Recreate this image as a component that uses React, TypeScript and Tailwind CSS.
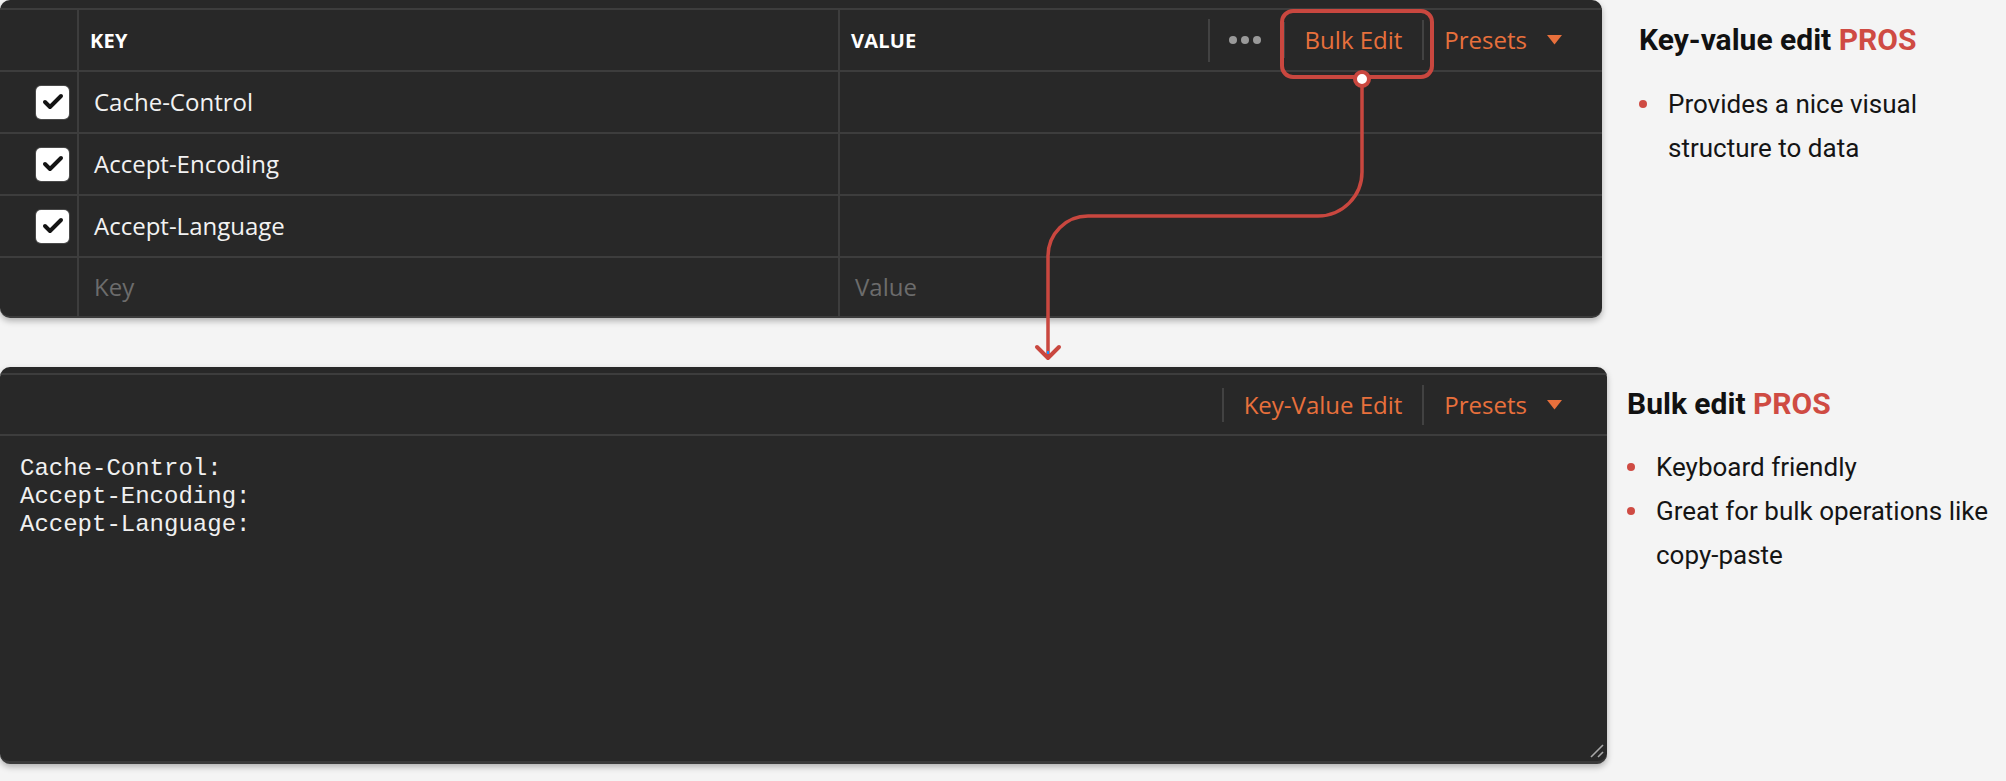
import React from 'react';
import { Check } from 'lucide-react';

const rows = ['Cache-Control', 'Accept-Encoding', 'Accept-Language'];

const Divider = ({ h }: { h: string }) => <div className={`w-[2px] bg-[#424242] ${h}`} />;

const Caret = () => (
  <svg width="15" height="10" viewBox="0 0 15 10" className="block">
    <polygon points="0,0 15,0 7.5,9.5" fill="#e8703c" />
  </svg>
);

const Presets = () => (
  <div className="flex items-center pl-[20px] pr-[40px]">
    <span className="text-[24px] text-[#e8703c]">Presets</span>
    <span className="ml-[20px]">
      <Caret />
    </span>
  </div>
);

const Bullet = ({ children }: { children: React.ReactNode }) => (
  <li className="flex items-start">
    <span className="mt-[18px] w-[8px] h-[8px] rounded-full bg-[#cf4b43] shrink-0" />
    <span className="ml-[21px]">{children}</span>
  </li>
);

function KeyValuePanel() {
  return (
    <div className="w-[1602px] h-[318px] rounded-[10px] bg-[#282828] shadow-[0_3px_6px_rgba(0,0,0,0.28)] border-b-2 border-[#3c3c3c] overflow-hidden font-['Open_Sans',sans-serif] flex flex-col shrink-0">
      <div className="h-[8px]" />
      <div className="border-t-2 border-[#3d3d3d]" />
      {/* header */}
      <div className="flex h-[62px] border-b-2 border-[#3d3d3d]">
        <div className="w-[79px] border-r-2 border-[#3d3d3d]" />
        <div className="w-[761px] border-r-2 border-[#3d3d3d] flex items-center pl-[11px] pt-[2px]">
          <span className="text-[20px] font-bold text-white tracking-[0.2px]">KEY</span>
        </div>
        <div className="flex-1 flex items-center pl-[11px]">
          <span className="text-[20px] font-bold text-white tracking-[0.2px] pt-[2px]">VALUE</span>
          <div className="flex-1" />
          <Divider h="h-[43px]" />
          <div className="flex items-center gap-[4px] ml-[19px] mr-[22px]">
            <span className="w-[8px] h-[8px] rounded-full bg-[#9a9a9a]" />
            <span className="w-[8px] h-[8px] rounded-full bg-[#9a9a9a]" />
            <span className="w-[8px] h-[8px] rounded-full bg-[#9a9a9a]" />
          </div>
          <Divider h="h-[36px]" />
          <span className="px-[20px] text-[24px] text-[#e8703c]">Bulk Edit</span>
          <Divider h="h-[40px]" />
          <Presets />
        </div>
      </div>
      {rows.map((r) => (
        <div key={r} className="flex h-[62px] border-b-2 border-[#3d3d3d]">
          <div className="w-[79px] border-r-2 border-[#3d3d3d] flex items-center justify-end pr-[8px]">
            <div className="w-[33px] h-[33px] rounded-[5px] bg-white ring-1 ring-[#4a4a4a] flex items-center justify-center">
              <Check size={24} strokeWidth={4} color="#141414" />
            </div>
          </div>
          <div className="w-[761px] border-r-2 border-[#3d3d3d] flex items-center pl-[15px]">
            <span className="text-[24px] text-[#f2f2f2]">{r}</span>
          </div>
          <div className="flex-1" />
        </div>
      ))}
      <div className="flex flex-1">
        <div className="w-[79px] border-r-2 border-[#3d3d3d]" />
        <div className="w-[761px] border-r-2 border-[#3d3d3d] flex items-center pl-[15px]">
          <span className="text-[24px] text-[#6c6c6c]">Key</span>
        </div>
        <div className="flex-1 flex items-center pl-[15px]">
          <span className="text-[24px] text-[#6c6c6c]">Value</span>
        </div>
      </div>
    </div>
  );
}

function BulkPanel() {
  return (
    <div className="relative w-[1607px] h-[397px] rounded-[10px] bg-[#282828] shadow-[0_3px_6px_rgba(0,0,0,0.28)] border-b-[3px] border-[#3a3a3a] overflow-hidden flex flex-col shrink-0">
      <div className="h-[6px]" />
      <div className="border-t-2 border-[#3d3d3d]" />
      <div className="h-[61px] border-b-2 border-[#3d3d3d] flex items-center justify-end font-['Open_Sans',sans-serif]">
        <Divider h="h-[34px]" />
        <span className="px-[20px] text-[24px] text-[#e8703c]">Key-Value Edit</span>
        <Divider h="h-[40px]" />
        <div className="pr-[5px]">
          <Presets />
        </div>
      </div>
      <div className="flex-1 pt-[19px] pl-[20px] font-['Liberation_Mono',monospace] text-[24px] leading-[28px] text-[#f0f0f0] whitespace-pre">
        {'Cache-Control:\nAccept-Encoding:\nAccept-Language:'}
      </div>
      {/* resize grip */}
      <svg width="14" height="14" viewBox="0 0 14 14" className="absolute right-[3px] bottom-[3px]">
        <line x1="1" y1="13" x2="13" y2="1" stroke="#a8a8a8" strokeWidth="1.6" />
        <line x1="8" y1="13" x2="13" y2="8" stroke="#a8a8a8" strokeWidth="1.6" />
      </svg>
    </div>
  );
}

export default function App() {
  const red = '#c9473f';
  return (
    <div className="relative w-[2006px] h-[781px] bg-[#f4f4f4] overflow-hidden">
      <div className="flex items-start">
        <KeyValuePanel />
        <div className="ml-[37px] pt-[22px] font-['Roboto',sans-serif]">
          <h2 className="text-[30px] leading-[36px] font-bold text-[#111]">
            Key-value edit <span className="text-[#cf4b43]">PROS</span>
          </h2>
          <ul className="mt-[24px] w-[330px] text-[26px] leading-[44px] text-[#151515]">
            <Bullet>Provides a nice visual structure to data</Bullet>
          </ul>
        </div>
      </div>
      <div className="flex items-start mt-[49px]">
        <BulkPanel />
        <div className="ml-[20px] pt-[19px] font-['Roboto',sans-serif]">
          <h2 className="text-[30px] leading-[36px] font-bold text-[#111]">
            Bulk edit <span className="text-[#cf4b43]">PROS</span>
          </h2>
          <ul className="mt-[23px] w-[370px] text-[26px] leading-[44px] text-[#151515]">
            <Bullet>Keyboard friendly</Bullet>
            <Bullet>Great for bulk operations like copy-paste</Bullet>
          </ul>
        </div>
      </div>

      {/* annotation overlay */}
      <svg width="2006" height="781" className="absolute left-0 top-0 pointer-events-none">
        <rect x="1282" y="11" width="150" height="66" rx="11" fill="none" stroke={red} strokeWidth="4" />
        <path
          d="M1362 86 V172 A44 44 0 0 1 1318 216 H1088 A40 40 0 0 0 1048 256 V357"
          fill="none"
          stroke={red}
          strokeWidth="3.5"
        />
        <polyline points="1037,347 1048,358 1059,347" fill="none" stroke={red} strokeWidth="4" strokeLinecap="round" strokeLinejoin="round" />
        <rect x="1047" y="351" width="2" height="3" fill="#1e90ff" />
        <circle cx="1362" cy="79" r="7" fill="#fff" stroke={red} strokeWidth="4" />
      </svg>
    </div>
  );
}
